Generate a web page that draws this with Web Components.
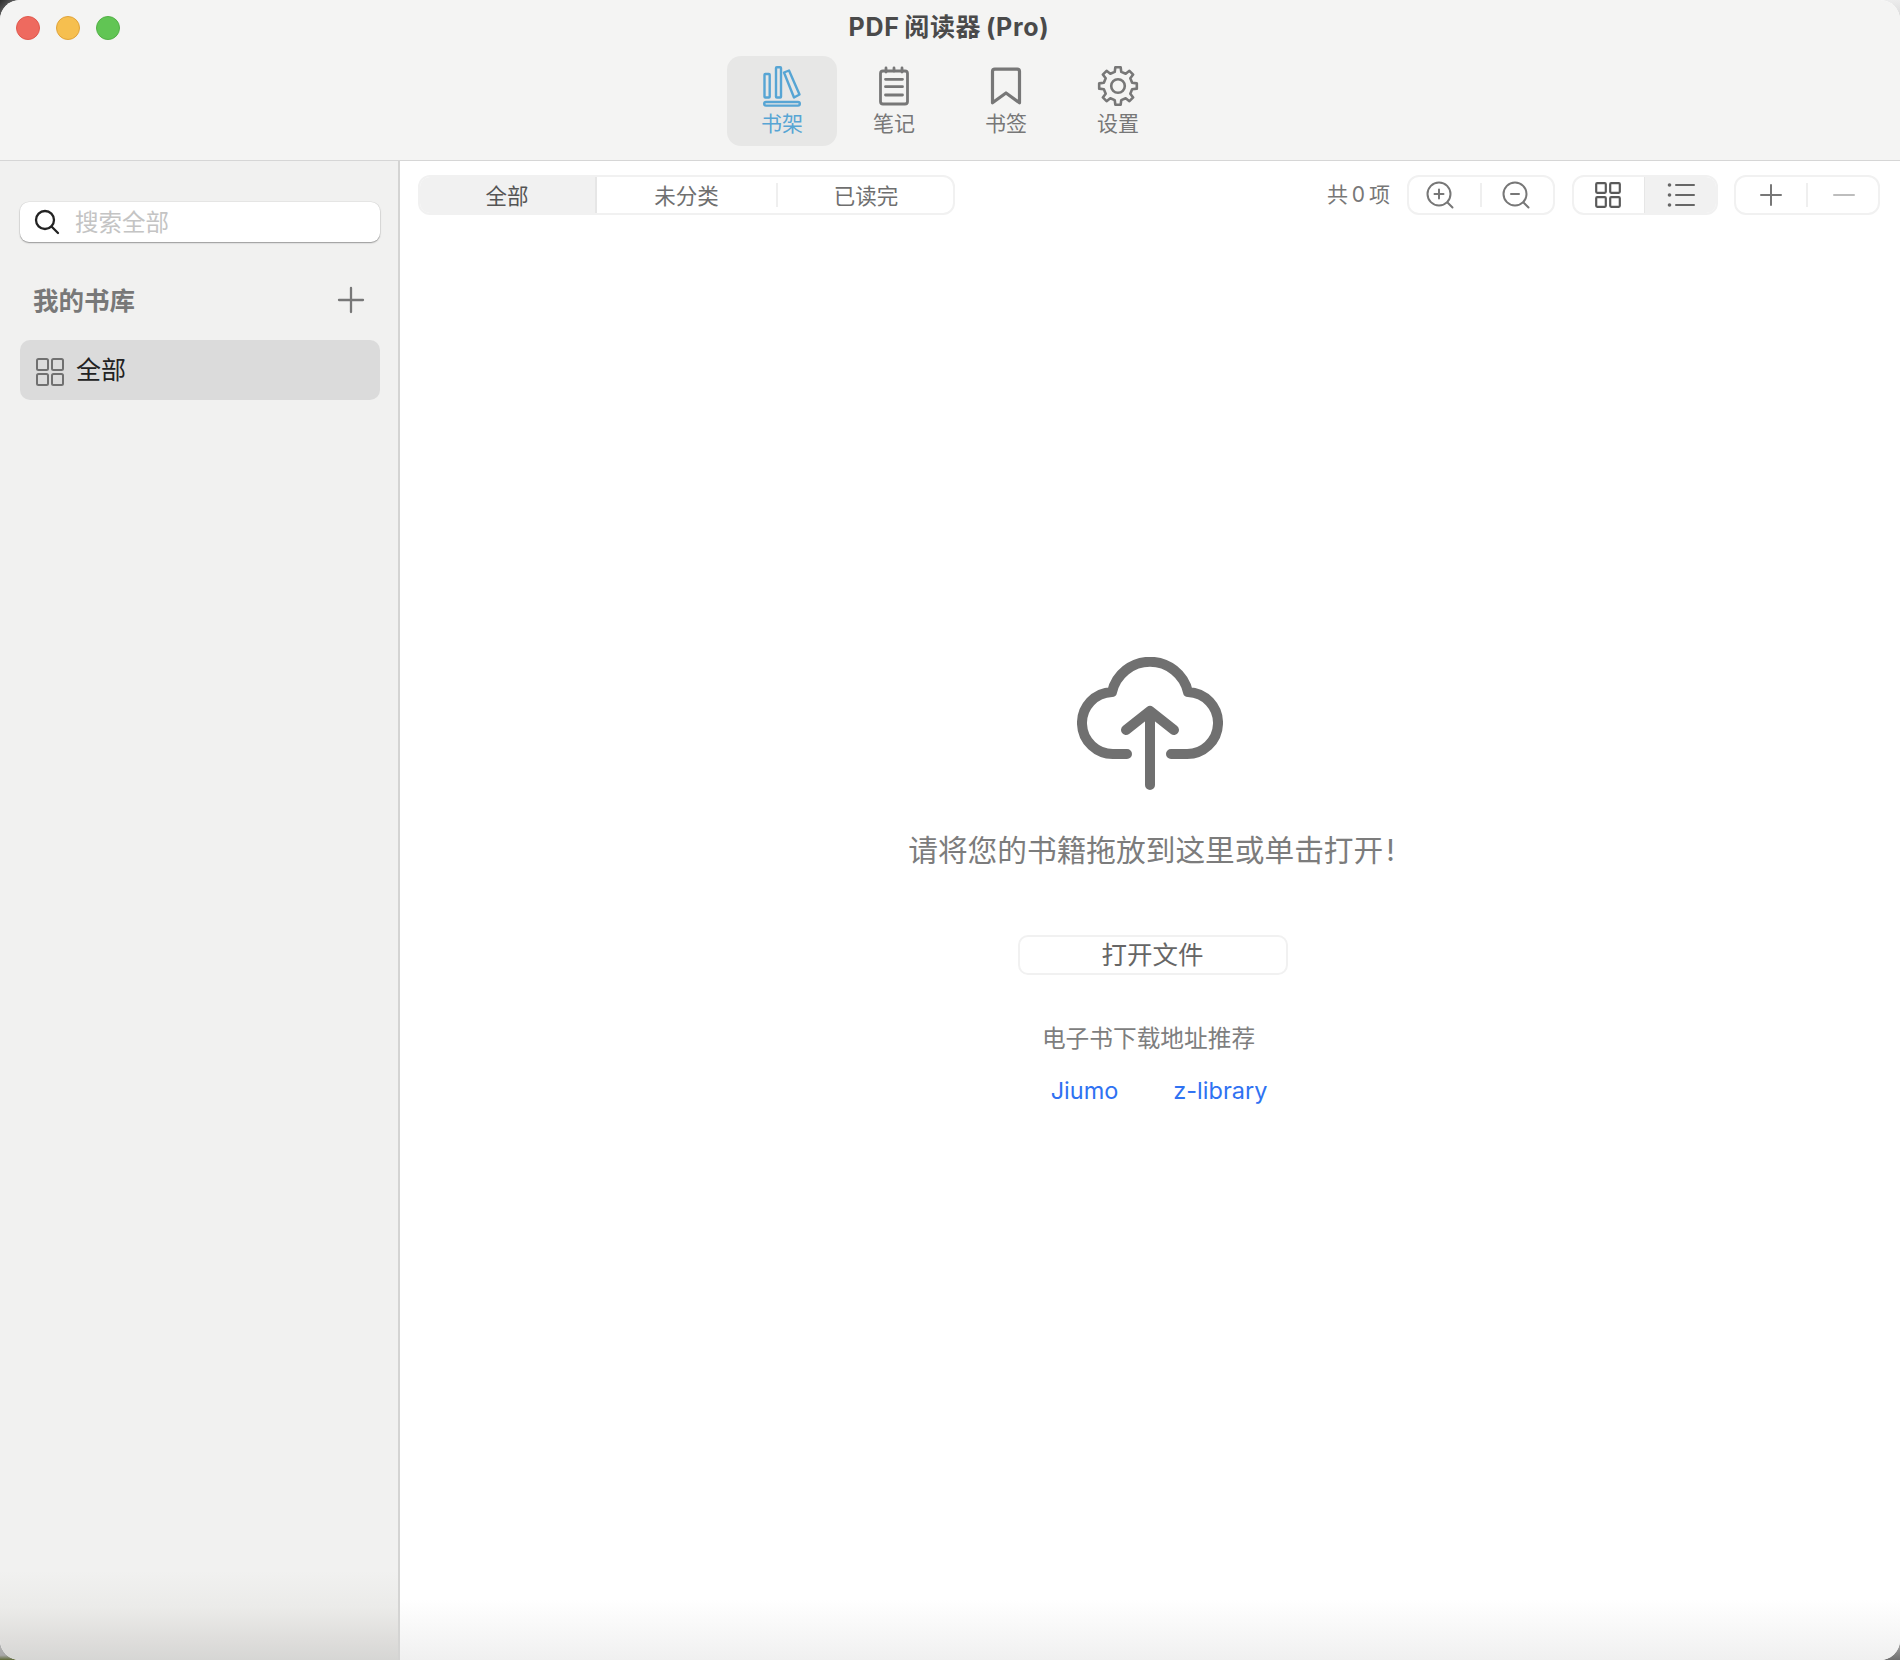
<!DOCTYPE html>
<html lang="zh">
<head>
<meta charset="utf-8">
<style>
html,body{margin:0;padding:0;width:1900px;height:1660px;overflow:hidden}
body{font-family:"Noto Sans CJK SC","Inter",sans-serif;background:
  linear-gradient(135deg,#2c2c2c 0,#8a8a8a 60%,#c9c9c9 100%) 0 0/24px 24px no-repeat,
  linear-gradient(#ececec,#d4d4d4) 100% 0/24px 24px no-repeat,
  linear-gradient(#b9b9b9 0,#a8a8a8 80%,#5f6a38 100%) 0 100%/24px 24px no-repeat,
  linear-gradient(#bdbdbd,#6f6f6f) 100% 100%/24px 24px no-repeat,
  #e8e8e8}
</style>
</head>
<body>
<app-window>
  <title-bar slot="top"></title-bar>
  <side-bar slot="side"></side-bar>
  <main-pane slot="main"></main-pane>
</app-window>
<script>
const FONT='"Inter","Noto Sans CJK SC",sans-serif';
const CJK='"Noto Sans CJK SC","Inter",sans-serif';
function def(name,css,html){
  customElements.define(name,class extends HTMLElement{
    constructor(){super();const s=this.attachShadow({mode:'open'});s.innerHTML=`<style>${css}</style>${html}`;}
  });
}
function gear(cx,cy,ro,ri,n){
  let d='';const p=(r,a)=>{const t=a*Math.PI/180;return (cx+r*Math.cos(t)).toFixed(2)+' '+(cy+r*Math.sin(t)).toFixed(2)};
  for(let i=0;i<n;i++){
    const a=i*360/n-90;
    d+=(i?'L':'M')+p(ri,a-13)+'L'+p(ro,a-8)+'L'+p(ro,a+8)+'L'+p(ri,a+13);
  }
  return d+'Z';
}
def('app-window',`
:host{display:grid;grid-template-columns:400px minmax(0,1fr);grid-template-rows:161px minmax(0,1fr);width:1900px;height:1660px;border-radius:20px;overflow:hidden;background:#fff}
`,`<slot name="top"></slot><slot name="side"></slot><slot name="main"></slot>`);

const tab=(label,svg,active)=>`<div class="tab ${active?'on':''}">${svg}<span>${label}</span></div>`;
def('title-bar',`
:host{display:flex;grid-column:1/3;flex-direction:column;position:relative;height:161px;box-sizing:border-box;background:#f4f4f3;border-bottom:1.5px solid #d6d6d6}
.lights{position:absolute;left:16px;top:16px;display:flex;gap:16px}
.lights i{width:24px;height:24px;border-radius:50%;box-sizing:border-box;display:block}
.title{font:700 25px/26px ${FONT};color:#4a4a4a;text-align:center;padding-top:14px;height:26px;word-spacing:-2px;letter-spacing:.7px;margin-left:-2px}
.tabs{display:flex;justify-content:center;gap:2px;margin-top:16px}
.tab{width:110px;height:90px;border-radius:14px;display:flex;flex-direction:column;align-items:center;color:#777;font:400 21px/24px ${CJK};box-sizing:border-box;padding-top:9px}
.tab svg{display:block;width:48px;height:48px;margin-bottom:-3px}
.tab.on{background:#e7e7e6;color:#57a5d4}
`,`<div class="lights"><i style="background:#ee6a5f;border:1px solid #e0584d"></i><i style="background:#f6bf4f;border:1px solid #e0a33a"></i><i style="background:#61c554;border:1px solid #52b046"></i></div>
<div class="title">PDF 阅读器 (Pro)</div>
<div class="tabs">
${tab('书架',`<svg viewBox="0 0 48 48" fill="none" stroke="currentColor" stroke-width="2.400" stroke-linejoin="round"><rect x="6.500" y="9" width="5.200" height="23.500" rx=".8"/><rect x="18" y="2.200" width="5" height="30.300" rx=".8"/><path d="M26 7.500l5-2L41.500 29.500l-5.500 3z"/><rect x="6.200" y="37" width="35.600" height="3.600" rx="1.800"/></svg>`,true)}
${tab('笔记',`<svg viewBox="0 0 48 48" fill="none" stroke="currentColor" stroke-width="2.800" stroke-linecap="round" stroke-linejoin="round"><rect x="10.500" y="6" width="27" height="33" rx="2.500"/><path d="M16 3v4M32 3v4M24 3v3M15.500 14.300h17M15.500 21.700h17M15.500 30h17"/></svg>`)}
${tab('书签',`<svg viewBox="0 0 48 48" fill="none" stroke="currentColor" stroke-width="3.200" stroke-linejoin="round" stroke-linecap="round"><path d="M10.500 37.800V6.500a2.300 2.300 0 0 1 2.300-2.300h22.400a2.300 2.300 0 0 1 2.300 2.300v31.300L24 28z"/></svg>`)}
${tab('设置',`<svg viewBox="0 0 48 48" fill="none" stroke="currentColor" stroke-width="2.600" stroke-linejoin="round"><circle cx="24" cy="21" r="6.800"/><path d="${gear(24,21,19,14.500,8)}"/></svg>`)}
</div>`);

def('side-bar',`
:host{display:block;background:linear-gradient(#f1f1f0 0,#f1f1f0 94%,#ebebe9 96.500%,#dedddb 98.700%,#d6d6d4 100%);border-right:2px solid #d4d4d3;box-sizing:border-box;padding:41px 18px 0 20px;height:1499px}
.search{height:40px;background:#fff;border-radius:9px;box-shadow:0 1px 1.500px rgba(0,0,0,.35),0 0 0 .5px rgba(0,0,0,.08);display:flex;align-items:center;padding-left:14px;color:#c4c4c4;font:400 23.500px/36px ${CJK}}
.search span{padding-bottom:2px}
.search svg{width:26px;height:26px;margin-right:15px}
.head{display:flex;justify-content:space-between;align-items:center;height:40px;margin:38px 0 0;padding:0 15px 0 13px;font:700 25.500px/36px ${CJK};color:#787878}
.head span{padding-bottom:2px}
.head svg{width:28px;height:28px}
.item{margin-top:20px;height:60px;background:#dbdbdb;border-radius:10px;display:flex;align-items:center;padding-left:16px;font:400 25px/52px ${CJK};color:#222}
.item span{padding-bottom:4px}
.item svg{width:28px;height:28px;margin-right:12px;margin-top:3px}
`,`<div class="search"><svg viewBox="0 0 26 26" fill="none" stroke="#222" stroke-width="2.300" stroke-linecap="round"><circle cx="11" cy="11" r="9"/><path d="M17.500 17.500L24 24"/></svg><span>搜索全部</span></div>
<div class="head"><span>我的书库</span><svg viewBox="0 0 28 28" stroke="#777" stroke-width="2.300" stroke-linecap="round"><path d="M14 2v24M2 14h24"/></svg></div>
<div class="item"><svg viewBox="0 0 28 28" fill="none" stroke="#707070" stroke-width="2"><rect x="1" y="1" width="11" height="11" rx="1.500"/><rect x="16" y="1" width="11" height="11" rx="1.500"/><rect x="1" y="16" width="11" height="11" rx="1.500"/><rect x="16" y="16" width="11" height="11" rx="1.500"/></svg><span>全部</span></div>`);

def('seg-group',`
:host{display:flex;height:40px;box-sizing:border-box;border:2px solid #f1f1f1;border-radius:12px;overflow:hidden;background:#fff;flex:none}
`,`<slot></slot>`);
def('seg-item',`
:host{display:flex;align-items:center;justify-content:center;height:100%;box-sizing:border-box;color:#6f6f6f;font:400 21.500px/36px ${CJK};position:relative;flex:none}
:host([on]){background:#f1f1f1;color:#555}
:host([sep])::after{content:"";position:absolute;right:-1px;top:6px;bottom:6px;width:2px;background:#efefef}
:host([solid])::after{content:"";position:absolute;right:-1px;top:-2px;bottom:-2px;width:2px;background:#e6e6e6}
`,`<slot></slot>`);

def('main-pane',`
:host{display:flex;flex-direction:column;height:1499px;background:linear-gradient(#fff 0,#fff 96%,#f0f0f0 100%);box-sizing:border-box;padding:14px 20px 0 18px;min-width:0}
.bar{display:flex;align-items:center}
.count{font:400 21px/40px ${FONT};color:#777;margin-left:auto;margin-right:17px;word-spacing:-2px}
.gap{width:17px;flex:none}
.gap.b{width:16px}
.empty{display:flex;flex-direction:column;align-items:center;margin-left:2px}
.cloud{display:block;width:146px;height:133px;margin-top:442px}
.msg{font:400 29.700px/40px ${FONT};color:#7c7c7c;margin-top:40px;margin-left:3px;white-space:nowrap}
.msg span{margin-left:3px}
.btn{margin-top:65px;margin-left:5px;width:270px;height:40px;box-sizing:border-box;border:2px solid #f1f1f1;border-radius:10px;text-align:center;font:400 25.500px/32px ${CJK};color:#666}
.rec{font:400 23.700px/32px ${CJK};color:#7e7e7e;margin-top:46px;margin-left:-3px}
.links{display:flex;gap:55px;margin-top:22px;font:400 23.500px/32px ${FONT};color:#2f72f2;margin-left:18px}
`,`<div class="bar">
<seg-group style="width:537px">
  <seg-item on solid style="width:176px;padding-right:2px">全部</seg-item>
  <seg-item sep style="width:181px">未分类</seg-item>
  <seg-item style="width:176px;padding-left:2px">已读完</seg-item>
</seg-group>
<span class="count">共 0 项</span>
<seg-group style="width:148px">
  <seg-item sep style="width:72px"><svg style="display:block;margin-right:10px" width="30" height="30" viewBox="0 0 30 30" fill="none" stroke="#777" stroke-width="2" stroke-linecap="round"><circle cx="14" cy="14" r="11.500"/><path d="M22.500 22.500l5 5M14 9.500v9M9.500 14h9"/></svg></seg-item>
  <seg-item style="width:72px"><svg style="display:block;margin-right:2px" width="30" height="30" viewBox="0 0 30 30" fill="none" stroke="#777" stroke-width="2" stroke-linecap="round"><circle cx="14" cy="14" r="11.500"/><path d="M22.500 22.500l5 5M10 14h8"/></svg></seg-item>
</seg-group>
<div class="gap"></div>
<seg-group style="width:146px">
  <seg-item solid style="width:71px"><svg style="display:block;margin-right:4px" width="26" height="26" viewBox="0 0 26 26" fill="none" stroke="#5a5a5a" stroke-width="2.200"><rect x="1.200" y="1.200" width="9.600" height="9.600" rx="1"/><rect x="15.200" y="1.200" width="9.600" height="9.600" rx="1"/><rect x="1.200" y="15.200" width="9.600" height="9.600" rx="1"/><rect x="15.200" y="15.200" width="9.600" height="9.600" rx="1"/></svg></seg-item>
  <seg-item on style="width:71px"><svg style="display:block" width="28" height="26" viewBox="0 0 28 26" fill="none" stroke="#666" stroke-width="2" stroke-linecap="round"><path d="M9 3h18M9 13h18M9 23h18"/><circle cx="2.500" cy="3" r="1.800" fill="#666" stroke="none"/><circle cx="2.500" cy="13" r="1.800" fill="#666" stroke="none"/><circle cx="2.500" cy="23" r="1.800" fill="#666" stroke="none"/></svg></seg-item>
</seg-group>
<div class="gap b"></div>
<seg-group style="width:146px">
  <seg-item sep style="width:71px"><svg style="display:block;margin-right:2px" width="22" height="22" viewBox="0 0 22 22" stroke="#777" stroke-width="2" stroke-linecap="round"><path d="M11 1v20M1 11h20"/></svg></seg-item>
  <seg-item style="width:71px"><svg style="display:block;margin-left:2px" width="22" height="22" viewBox="0 0 22 22" stroke="#bdbdbd" stroke-width="2" stroke-linecap="round"><path d="M1 11h20"/></svg></seg-item>
</seg-group>
</div>
<div class="empty">
<svg class="cloud" viewBox="0 0 146 133" fill="none" stroke="#707070" stroke-width="10" stroke-linecap="round" stroke-linejoin="round"><path d="M50 97H37A31 31 0 0 1 35 35A39 39 0 0 1 111 35A31 31 0 0 1 109 97H94"/><path d="M49 73L73 54L97 73M73 55V128"/></svg>
<div class="msg">请将您的书籍拖放到这里或单击打开<span>!</span></div>
<div class="btn">打开文件</div>
<div class="rec">电子书下载地址推荐</div>
<div class="links"><span>Jiumo</span><span>z-library</span></div>
</div>`);
</script>
</body>
</html>
